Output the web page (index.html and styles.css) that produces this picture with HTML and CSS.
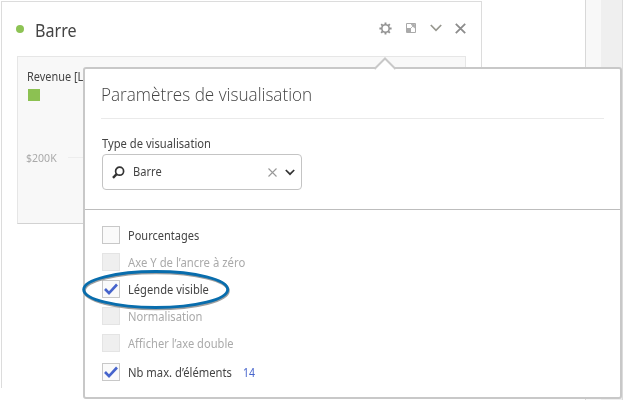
FILE: index.html
```html
<!DOCTYPE html>
<html lang="fr">
<head>
<meta charset="utf-8">
<title>Barre</title>
<link rel="stylesheet" href="styles.css">
</head>
<body>
<div class="workspace">
  <section class="card">
    <header class="card-header">
      <span class="dot"></span>
      <h1 class="card-title"><span class="t t-card">Barre</span></h1>
      <div class="actions">
        <svg width="13" height="13" viewBox="0 0 13 13"><circle cx="6.5" cy="6.5" r="3.7" fill="none" stroke="#929292" stroke-width="1.6"/><path d="M6.5 .4v2M6.5 10.6v2M.4 6.5h2M10.6 6.5h2M2.2 2.2l1.4 1.4M9.4 9.4l1.4 1.4M10.8 2.2L9.4 3.6M3.6 9.4l-1.4 1.4" stroke="#929292" stroke-width="1.9"/></svg>
        <svg width="10" height="10" viewBox="0 0 10 10"><path d="M.5.5h9v9h-9z" fill="none" stroke="#aaa"/><path d="M1 5h4v4H1z" fill="#aaa"/><path d="M5.2 1.5h3.3v3.3zM4.5 5.5l3-3" fill="#aaa" stroke="#aaa" stroke-width=".8"/></svg>
        <svg width="12" height="8" viewBox="0 0 12 8"><path d="M.8 1L6 6.3 11.2 1" fill="none" stroke="#97978f" stroke-width="1.7"/></svg>
        <svg width="11" height="11" viewBox="0 0 11 11"><path d="M.8.8l9.4 9.4M10.2.8L.8 10.2" stroke="#8c8c8c" stroke-width="1.8"/></svg>
      </div>
    </header>
    <div class="chart">
      <div class="legend-title"><span class="t t-revenue">Revenue [L</span></div>
      <div class="swatch"></div>
      <div class="axis"><span class="t t-axis">$200K</span><i></i></div>
    </div>
  </section>
  <aside class="rail"></aside>
</div>

<div class="popover">
  <svg class="caret" width="22" height="13" viewBox="0 0 22 13"><path d="M1 12L11 1.7 21 12v1H1z" fill="#fff"/><path d="M.5 12L11 1.5 21.5 12" fill="none" stroke="#c8c8c8" stroke-width="2"/></svg>
  <div class="settings">
    <h2><span class="t t-heading">Paramètres de visualisation</span></h2>
    <label class="type-label"><span class="t t-type">Type de visualisation</span></label>
    <div class="combo">
      <svg width="13" height="13" viewBox="0 0 13 13"><circle cx="7.6" cy="5.2" r="4" fill="none" stroke="#333" stroke-width="1.7"/><path d="M4.6 8.2L1 11.8" stroke="#333" stroke-width="2.4"/></svg>
      <span class="combo-value"><span class="t t-value">Barre</span></span>
      <svg width="9" height="9" viewBox="0 0 9 9"><path d="M.5.5l8 8M8.5.5l-8 8" stroke="#999" stroke-width="1.1"/></svg>
      <svg class="combo-arrow" width="10" height="7" viewBox="0 0 10 7"><path d="M.8 1L5 5.2 9.2 1" fill="none" stroke="#333" stroke-width="1.7"/></svg>
    </div>
  </div>
  <div class="options">
    <div class="option"><span class="box"></span><span class="t t-pct">Pourcentages</span></div>
    <div class="option off"><span class="box"></span><span class="t t-axe">Axe Y de l’ancre à zéro</span></div>
    <div class="option"><span class="box"><svg width="16" height="16" viewBox="0 0 16 16"><path d="M2 8l4 4.2L14 3.5" fill="none" stroke="#4664cc" stroke-width="2.6"/></svg></span><span class="t t-leg">Légende visible</span></div>
    <div class="option off"><span class="box"></span><span class="t t-norm">Normalisation</span></div>
    <div class="option off"><span class="box"></span><span class="t t-dbl">Afficher l’axe double</span></div>
    <div class="option last"><span class="box"><svg width="16" height="16" viewBox="0 0 16 16"><path d="M2 8l4 4.2L14 3.5" fill="none" stroke="#4664cc" stroke-width="2.6"/></svg></span><span class="item-name"><span class="t t-max">Nb max. d’éléments</span></span><span class="t t-num">14</span></div>
  </div>
</div>
<svg class="highlight" width="156" height="48" viewBox="0 0 156 48"><ellipse class="ring-shadow" cx="77.3" cy="23.8" rx="72" ry="18"/><ellipse class="ring" cx="76.7" cy="22.5" rx="72" ry="18"/></svg>
</body>
</html>
```

FILE: styles.css
```css
* { box-sizing: border-box; }
body { margin: 0; width: 623px; height: 400px; overflow: hidden; position: relative; background: #fff; font-family: "Noto Sans", "Open Sans", sans-serif; font-size: 12px; color: #444; }
svg { display: block; flex: none; }
h1, h2 { margin: 0; font-weight: 400; }
.t { display: inline-block; white-space: nowrap; transform-origin: left center; }

.workspace { display: flex; justify-content: space-between; height: 400px; }
.card { width: 481px; height: 387px; margin: 1px 0 0 1px; border: 1px solid #dcdcdc; border-bottom: 0; padding-right: 15px; }
.card-header { display: flex; align-items: center; height: 54px; padding-left: 14px; }
.dot { width: 8px; height: 8px; margin-bottom: 1px; border-radius: 50%; background: #8dc354; }
.card-title { width: 60px; margin-left: 11px; padding-top: 1px; font-size: 18px; line-height: 24px; }
.actions { display: flex; align-items: center; margin-left: auto; margin-bottom: 2px; gap: 14px; }
.actions svg:last-child { margin-left: -1px; }
.chart { height: 168px; width: 449px; margin-left: 15px; padding: 11px 0 0 10px; background: #f8f8f8; border: 1px solid #e6e6e6; border-bottom-color: #d2d2d2; }
.legend-title { line-height: 17px; margin-left: -1px; }
.swatch { width: 12px; height: 12px; margin-top: 4px; background: #8cc152; }
.axis { display: flex; align-items: center; height: 16px; margin: 48px 0 0 -2px; font-size: 11px; color: #aaa; }
.axis .t { width: 42px; }
.axis i { width: 300px; height: 1px; background: #ededed; }
.rail { width: 38px; border-left: 1px solid #d8d8d8; border-right: 1px solid #dcdcdc; background: linear-gradient(90deg, #f8f8f8 15px, #efefef 15px); }

.popover { position: absolute; left: 83px; top: 67px; width: 539px; height: 332px; border: 2px solid #c8c8c8; border-radius: 3px; background: #fff; }
.caret { position: absolute; left: 289px; top: -12px; }
.settings { height: 141px; padding: 0 16px 0 17px; border-bottom: 1px solid #bdbdbd; }
h2 { height: 50px; margin-left: -1px; border-bottom: 1px solid #eaeaea; font-family: "Open Sans", "Noto Sans", sans-serif; font-weight: 300; font-size: 18px; line-height: 51px; }
.type-label { display: block; margin-top: 16px; height: 19px; line-height: 18px; }
.combo { display: flex; align-items: center; width: 200px; height: 36px; padding: 0 6px 0 9px; border: 1px solid #c4c4c4; border-radius: 4px; }
.combo-value { flex: 1; margin-left: 8px; line-height: 18px; }
.combo-arrow { margin-left: 8px; }

.options { padding: 16px 0 0 17px; }
.option { display: flex; align-items: center; height: 18px; margin-bottom: 9px; }
.box { width: 18px; height: 18px; margin-right: 8px; border: 1px solid #c8c8c8; background: #fafafa; flex: none; }
.off { color: #aaa; }
.off .box { background: #efefef; border-color: #e4e4e4; }
.last { margin-top: 11px; }
.item-name { width: 115px; }
.t-num { color: #4664cc; }

.highlight { position: absolute; left: 79px; top: 267px; }
.ring { fill: none; stroke: #086dad; stroke-width: 2.8; }
.ring-shadow { fill: none; stroke: #777; stroke-width: 3; opacity: .7; filter: blur(.6px); }

.t-card { transform: scaleX(.895); }
.t-revenue { transform: scaleX(.91); }
.t-axis { transform: scaleX(.96); }
.t-heading { transform: scaleX(.952); }
.t-type { transform: scaleX(.932); }
.t-value { transform: scaleX(.925); }
.t-pct { transform: scaleX(.918); }
.t-axe { transform: scaleX(.943); }
.t-leg { transform: scaleX(.928); }
.t-norm { transform: scaleX(.93); }
.t-dbl { transform: scaleX(.928); }
.t-max { transform: scaleX(.935); }
.t-num { transform: scaleX(.87); }
```
